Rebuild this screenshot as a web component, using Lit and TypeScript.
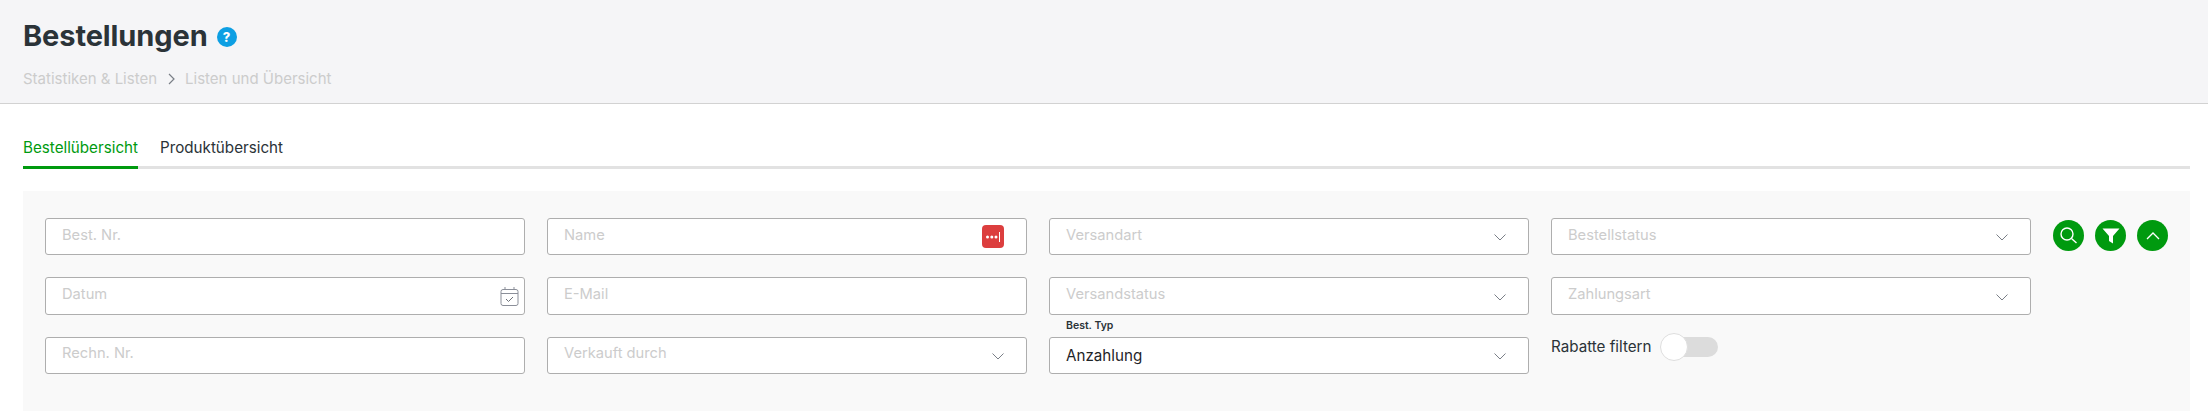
import { LitElement, html, css } from "lit";
import { customElement } from "lit/decorators.js";

const chevron = html`<svg class="chev" width="12" height="7" viewBox="0 0 12 7" fill="none"><path d="M0.500 0.500l5.500 5.500 5.500-5.500" stroke="#7a7f87" stroke-width="1"/></svg>`;

@customElement("app-root")
export class AppRoot extends LitElement {
  static styles = css`
    :host { display: block; font-family: "Inter", "Liberation Sans", sans-serif; background: #fff; height: 411px; overflow: hidden; color: #2b3338; }
    .head { background: #f5f5f7; height: 103px; border-bottom: 1px solid #d2d2d2; padding: 0 23px; box-sizing: content-box; }
    .title-row { display: flex; align-items: center; gap: 9px; padding-top: 14px; height: 44px; }
    h1 { margin: 0; font-size: 29px; line-height: 44px; font-weight: 700; letter-spacing: -0.1px; color: #2b3338; }
    .help { width: 20px; height: 20px; border-radius: 50%; background: #0d9fe3; color: #fff; font-size: 13px; font-weight: 800; display: flex; align-items: center; justify-content: center; margin-top: 2px; }
    .crumbs { display: flex; align-items: center; margin-top: 11px; font-size: 15px; line-height: 20px; color: #ccc; }
    .crumbs svg { margin: 0 10px 0 11px; }
    .tabs { display: flex; margin: 0 18px 0 23px; height: 65px; box-sizing: border-box; border-bottom: 3px solid #e2e2e2; padding-top: 32px; gap: 22px; }
    .tab { font-size: 15.2px; line-height: 24px; height: 33px; box-sizing: border-box; }
    .tab.on { color: #009a0f; border-bottom: 3px solid #009a0f; }
    .panel { margin: 22px 18px 0 23px; background: #f9f9f9; height: 220px; box-sizing: border-box; padding: 27px 0 0 22px; display: flex; }
    .grid { display: grid; grid-template-columns: repeat(4, 480px); grid-auto-rows: 37.4px; column-gap: 22px; row-gap: 22px; }
    .field { position: relative; display: flex; align-items: center; justify-content: space-between; background: #fff; border: 1px solid #aeaeae; border-radius: 3px; box-sizing: border-box; padding: 0 17px 0 16px; font-size: 14.7px; color: #ccc; }
    .field.pad { padding-bottom: 4px; }
    .field .chev { flex: none; margin-top: 2px; }
    .field.pad .chev { margin-top: 6px; }
    .field.val { color: #1f2528; font-size: 15.2px; }
    .field.sel { padding-right: 22px; }
    .typ { position: absolute; left: 16px; top: -19px; font-size: 10.5px; line-height: 14px; font-weight: 600; color: #2b3338; }
    .red { position: absolute; right: 22px; top: 6px; width: 22px; height: 23px; border-radius: 4px; background: #dc3e3e; display: flex; align-items: center; justify-content: center; }
    .cal { position: absolute; right: 5px; top: 8px; }
    .toggle-cell { display: flex; align-items: center; height: 28px; margin-top: -4px; font-size: 15.2px; gap: 8px; color: #2b3338; }
    .toggle { position: relative; width: 58px; height: 28px; }
    .track { position: absolute; left: 5px; right: 0; top: 4px; height: 20px; border-radius: 10px; background: #dcdcdc; }
    .thumb { position: absolute; left: 0; top: 0; width: 28px; height: 28px; box-sizing: border-box; border-radius: 50%; background: #fff; border: 1px solid #dedede; }
    .btns { display: flex; gap: 11px; margin-left: 22px; padding-top: 2px; align-self: flex-start; }
    .btn { width: 31px; height: 31px; border-radius: 50%; background: #009a0f; display: flex; align-items: center; justify-content: center; }
  `;

  render() {
    return html`
      <div class="head">
        <div class="title-row">
          <h1>Bestellungen</h1>
          <span class="help">?</span>
        </div>
        <div class="crumbs">
          <span>Statistiken &amp; Listen</span>
          <svg width="7" height="12" viewBox="0 0 7 12" fill="none"><path d="M1 1l5 5-5 5" stroke="#7a7f87" stroke-width="1.2"/></svg>
          <span>Listen und Übersicht</span>
        </div>
      </div>
      <div class="tabs">
        <div class="tab on">Bestellübersicht</div>
        <div class="tab">Produktübersicht</div>
      </div>
      <div class="panel">
        <div class="grid">
          <div class="field pad">Best. Nr.</div>
          <div class="field pad">Name
            <span class="red"><svg width="16" height="12" viewBox="0 0 16 12"><g fill="#fff"><circle cx="2.500" cy="6" r="1.500"/><circle cx="6.800" cy="6" r="1.500"/><circle cx="11" cy="6" r="1.500"/><rect x="14" y="1" width="1" height="10"/></g></svg></span>
          </div>
          <div class="field pad sel">Versandart ${chevron}</div>
          <div class="field pad sel">Bestellstatus ${chevron}</div>

          <div class="field pad">Datum
            <svg class="cal" width="19" height="20" viewBox="0 0 19 20" fill="none" stroke="#8b8f99" stroke-width="1"><rect x="1" y="3.500" width="17" height="16" rx="2"/><path d="M1 7.500h17M5 1v3M14 1v3"/><path d="M6 13l2.500 2.500 4.500-4.500" stroke="#6d7178"/></svg>
          </div>
          <div class="field pad">E-Mail</div>
          <div class="field pad sel">Versandstatus ${chevron}</div>
          <div class="field pad sel">Zahlungsart ${chevron}</div>

          <div class="field pad">Rechn. Nr.</div>
          <div class="field pad sel">Verkauft durch ${chevron}</div>
          <div class="field val sel"><span class="typ">Best. Typ</span>Anzahlung ${chevron}</div>
          <div class="toggle-cell">Rabatte filtern
            <span class="toggle"><span class="track"></span><span class="thumb"></span></span>
          </div>
        </div>
        <div class="btns">
          <span class="btn"><svg width="19" height="19" viewBox="0 0 19 19" fill="none" stroke="#fff" stroke-width="1.400"><circle cx="8" cy="8" r="6"/><path d="M12.500 12.500l5 4.500"/></svg></span>
          <span class="btn"><svg width="18" height="16" viewBox="0 0 18 16"><path d="M0.500 0.500h17l-6.500 7.500v7.500l-4-2.500v-5z" fill="#fff"/></svg></span>
          <span class="btn"><svg width="14" height="8" viewBox="0 0 14 8" fill="none"><path d="M1 7l6-6 6 6" stroke="#fff" stroke-width="1.300"/></svg></span>
        </div>
      </div>
    `;
  }
}
